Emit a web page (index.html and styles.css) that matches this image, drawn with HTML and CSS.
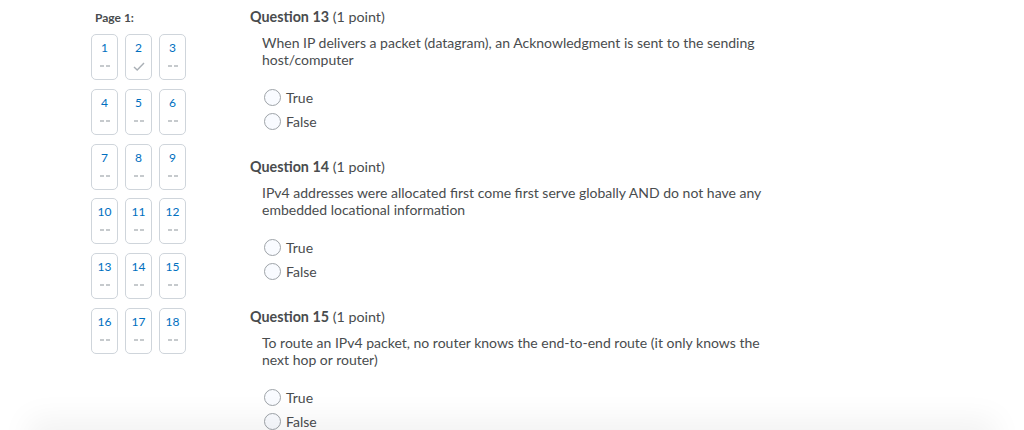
FILE: index.html
```html
<!DOCTYPE html>
<html>
<head>
<meta charset="utf-8">
<link rel="stylesheet" href="styles.css">
</head>
<body>
<div class="page">
  <aside class="sidebar">
    <div class="page-label">Page 1:</div>
    <div class="tiles">
      <div class="tile"><span class="num">1</span><span class="state"><span class="dash"></span></span></div>
      <div class="tile"><span class="num">2</span><span class="state"><svg width="12" height="9" viewBox="0 0 12 9"><path d="M1 5 L4.2 8 L11 1" fill="none" stroke="#a9afb5" stroke-width="1.4"/></svg></span></div>
      <div class="tile"><span class="num">3</span><span class="state"><span class="dash"></span></span></div>
      <div class="tile"><span class="num">4</span><span class="state"><span class="dash"></span></span></div>
      <div class="tile"><span class="num">5</span><span class="state"><span class="dash"></span></span></div>
      <div class="tile"><span class="num">6</span><span class="state"><span class="dash"></span></span></div>
      <div class="tile"><span class="num">7</span><span class="state"><span class="dash"></span></span></div>
      <div class="tile"><span class="num">8</span><span class="state"><span class="dash"></span></span></div>
      <div class="tile"><span class="num">9</span><span class="state"><span class="dash"></span></span></div>
      <div class="tile"><span class="num">10</span><span class="state"><span class="dash"></span></span></div>
      <div class="tile"><span class="num">11</span><span class="state"><span class="dash"></span></span></div>
      <div class="tile"><span class="num">12</span><span class="state"><span class="dash"></span></span></div>
      <div class="tile"><span class="num">13</span><span class="state"><span class="dash"></span></span></div>
      <div class="tile"><span class="num">14</span><span class="state"><span class="dash"></span></span></div>
      <div class="tile"><span class="num">15</span><span class="state"><span class="dash"></span></span></div>
      <div class="tile"><span class="num">16</span><span class="state"><span class="dash"></span></span></div>
      <div class="tile"><span class="num">17</span><span class="state"><span class="dash"></span></span></div>
      <div class="tile"><span class="num">18</span><span class="state"><span class="dash"></span></span></div>
    </div>
  </aside>
  <main class="questions">
    <section class="question">
      <h2 class="q-title"><b>Question 13</b> (1 point)</h2>
      <p class="q-text">When IP delivers a packet (datagram), an Acknowledgment is sent to the sending host/computer</p>
      <div class="options">
        <label class="option"><span class="radio"></span>True</label>
        <label class="option"><span class="radio"></span>False</label>
      </div>
    </section>
    <section class="question">
      <h2 class="q-title"><b>Question 14</b> (1 point)</h2>
      <p class="q-text">IPv4 addresses were allocated first come first serve globally AND do not have any embedded locational information</p>
      <div class="options">
        <label class="option"><span class="radio"></span>True</label>
        <label class="option"><span class="radio"></span>False</label>
      </div>
    </section>
    <section class="question">
      <h2 class="q-title"><b>Question 15</b> (1 point)</h2>
      <p class="q-text">To route an IPv4 packet, no router knows the end-to-end route (it only knows the next hop or router)</p>
      <div class="options">
        <label class="option"><span class="radio"></span>True</label>
        <label class="option"><span class="radio"></span>False</label>
      </div>
    </section>
  </main>
</div>
<div class="footer-shadow"></div>
</body>
</html>
```

FILE: styles.css
```css
html, body {
  margin: 0;
  padding: 0;
  background: #ffffff;
}
body {
  font-family: Lato, "Open Sans", sans-serif;
  color: #494c4e;
  overflow: hidden;
  height: 430px;
}
.page {
  display: flex;
  align-items: flex-start;
}
.sidebar {
  width: 96px;
  margin-left: 91px;
  padding-top: 10px;
  margin-right: 63px;
}
.page-label {
  font-size: 12px;
  font-weight: 700;
  line-height: 15px;
  margin-left: 4px;
  margin-bottom: 9px;
  color: #494c4e;
}
.tiles {
  display: grid;
  grid-template-columns: repeat(3, 27px);
  column-gap: 7px;
  row-gap: 8.8px;
}
.tile {
  box-sizing: border-box;
  height: 46px;
  border: 1px solid #cfd5db;
  border-radius: 5px;
  display: flex;
  flex-direction: column;
  align-items: center;
  padding-top: 5px;
}
.num {
  font-size: 12px;
  line-height: 16px;
  color: #006fbf;
}
.state {
  margin-top: 2px;
  height: 16px;
  display: flex;
  align-items: center;
  justify-content: center;
}
.dash {
  display: block;
  width: 10px;
  height: 2px;
  background: linear-gradient(to right, #c6cacd 0 4px, transparent 4px 6px, #c6cacd 6px 10px);
}
.questions {
  width: 515px;
  padding-top: 8px;
}
.question {
  margin-bottom: 25px;
}
.q-title {
  margin: 0;
  font-size: 14.3px;
  line-height: 17px;
  font-weight: 400;
  color: #494c4e;
}
.q-title b {
  font-weight: 700;
}
.q-text {
  margin: 10px 0 0 12px;
  font-size: 14px;
  line-height: 16.5px;
  color: #494c4e;
}
.options {
  margin: 17px 0 0 12px;
  display: flex;
  flex-direction: column;
}
.option {
  display: flex;
  align-items: center;
  height: 24px;
  font-size: 14px;
  color: #494c4e;
}
.radio {
  box-sizing: border-box;
  width: 17px;
  height: 17px;
  border: 1px solid #9ea3a8;
  border-radius: 50%;
  background: #f9fbff;
  margin-left: 2px;
  margin-right: 5px;
}
.footer-shadow {
  position: fixed;
  left: 40px;
  right: 40px;
  bottom: -30px;
  height: 30px;
  background: #f2f2f2;
  box-shadow: 0 0 30px 12px rgba(0, 0, 0, 0.05);
}
```
